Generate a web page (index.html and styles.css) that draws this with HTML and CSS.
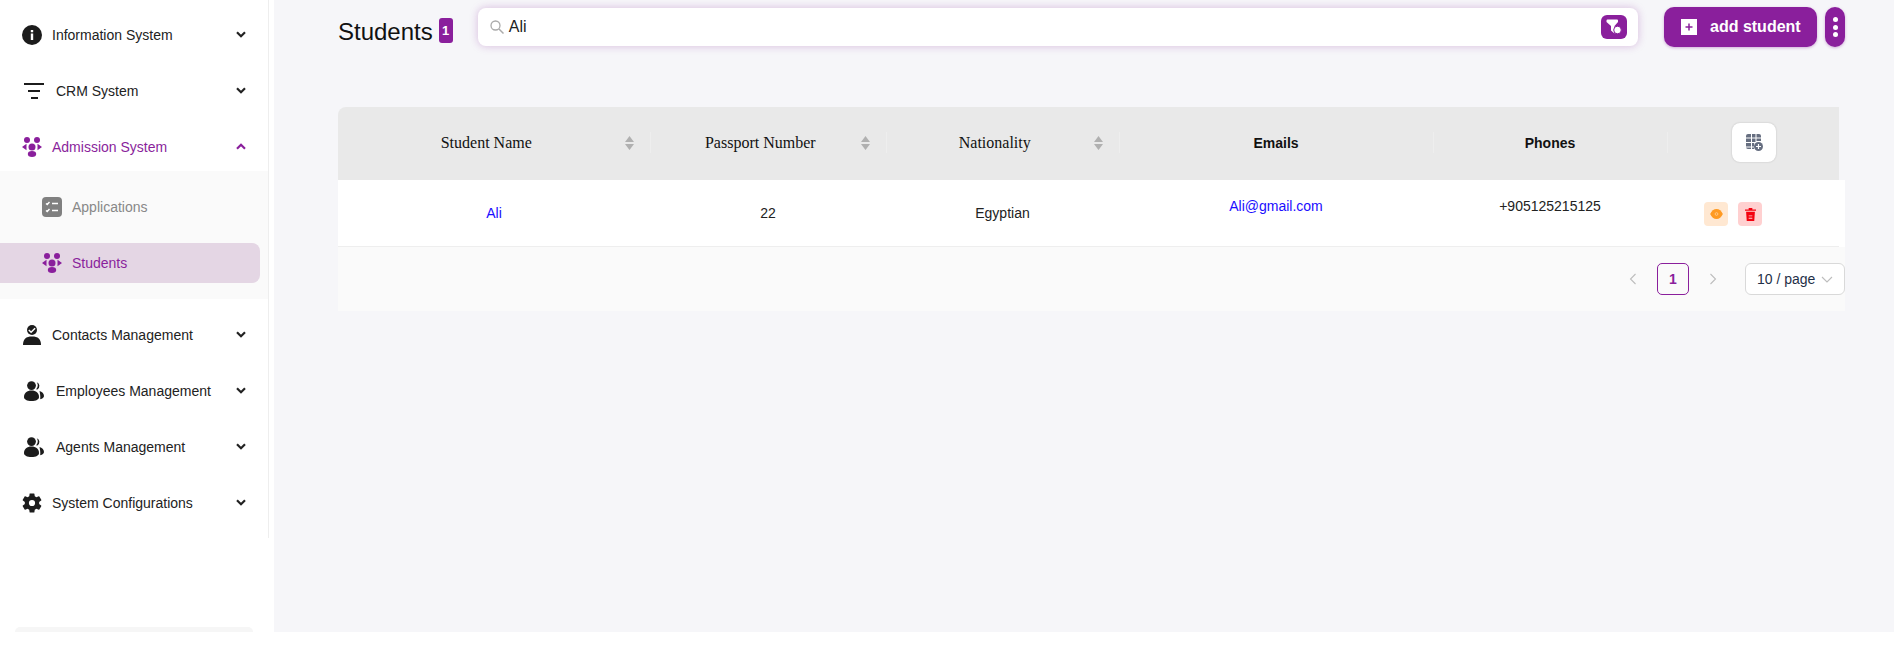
FILE: index.html
```html
<!DOCTYPE html>
<html>
<head>
  <title>Students</title>
  <meta name="viewport" content="width=device-width, initial-scale=1">
  <link rel="stylesheet" href="styles.css">
</head>
<body>
  <svg class="sprites" width="0" height="0">
    <symbol id="i-chevron" viewBox="0 0 10 7"><path d="M1 1.200l4 4 4-4" fill="none" stroke="currentColor" stroke-width="2.200"/></symbol>
    <symbol id="i-group" viewBox="0 0 20 20">
      <circle cx="5" cy="3" r="3"/><circle cx="15" cy="3" r="3"/><circle cx="10" cy="10" r="3.500"/>
      <path d="M0 10l4.500-3.200v6.400zM20 10l-4.500-3.200v6.400z"/><ellipse cx="10" cy="17" rx="4.200" ry="3"/>
    </symbol>
    <symbol id="i-users" viewBox="0 0 20 20">
      <circle cx="7.500" cy="4.600" r="4.400"/>
      <path d="M0 16c0-4 3-6.500 7.500-6.500S15 12 15 16c0 2.500-3 4-7.500 4S0 18.500 0 16z"/>
      <path d="M12.800 1.200a4 4 0 0 1 .6 7.200 5 5 0 0 1-1.200-.2 6 6 0 0 0 .6-7zM15.500 10c2.500.6 4.500 2.600 4.500 5 0 1.600-1.400 2.800-3.800 3.200.4-2.800-.2-5.800-.7-8.200z"/>
    </symbol>
    <symbol id="i-trash" viewBox="0 0 12 14"><path d="M4 0h4v1.500h4V3H0V1.500h4zM1.200 4h9.600l-.7 10H1.900zM4 8v1h4V8zm0 2.500v1h4v-1z" fill-rule="evenodd"/></symbol>
    <symbol id="i-sort" viewBox="0 0 9 14"><path d="M4.500 0L9 6H0zM0 8h9l-4.500 6z"/></symbol>
  </svg>

  <div class="page">
    <aside class="sidebar">
      <nav class="nav">
        <a class="nav-row">
          <svg class="nav-icon" viewBox="0 0 20 20"><circle cx="10" cy="10" r="10"/><path d="M8.800 8.500h2.400v6.500H8.800zM8.800 5h2.400v2.300H8.800z" fill="#fff"/></svg>
          <span>Information System</span>
          <svg class="chevron"><use href="#i-chevron"/></svg>
        </a>
        <a class="nav-row nav-row-wide">
          <svg class="nav-icon" viewBox="0 0 20 20"><path d="M0 2h20v2H0zM4 9h12v2H4zM7 16h7v2H7z"/></svg>
          <span>CRM System</span>
          <svg class="chevron"><use href="#i-chevron"/></svg>
        </a>
        <a class="nav-row nav-row-active">
          <svg class="nav-icon"><use href="#i-group"/></svg>
          <span>Admission System</span>
          <svg class="chevron chevron-up"><use href="#i-chevron"/></svg>
        </a>
        <div class="subnav">
          <a class="sub-row">
            <svg class="nav-icon icon-muted" viewBox="0 0 20 20"><rect width="20" height="20" rx="4"/><path d="M4 6.500l1.200 1L7.500 5M4 13.500l1.200 1 2.300-2.500M10 6.500h6M10 13.500h6" fill="none" stroke="#fff" stroke-width="1.400"/></svg>
            <span>Applications</span>
          </a>
          <a class="sub-row sub-row-active">
            <svg class="nav-icon"><use href="#i-group"/></svg>
            <span>Students</span>
          </a>
        </div>
        <a class="nav-row">
          <svg class="nav-icon" viewBox="0 0 20 20"><circle cx="10" cy="5" r="5"/><path d="M6.800 5l2.300 2.200 4-4" fill="none" stroke="#fff" stroke-width="1.500"/><path d="M1 20c0-6 3-8.500 9-8.500s9 2.500 9 8.500z"/></svg>
          <span>Contacts Management</span>
          <svg class="chevron"><use href="#i-chevron"/></svg>
        </a>
        <a class="nav-row nav-row-wide">
          <svg class="nav-icon"><use href="#i-users"/></svg>
          <span>Employees Management</span>
          <svg class="chevron"><use href="#i-chevron"/></svg>
        </a>
        <a class="nav-row nav-row-wide">
          <svg class="nav-icon"><use href="#i-users"/></svg>
          <span>Agents Management</span>
          <svg class="chevron"><use href="#i-chevron"/></svg>
        </a>
        <a class="nav-row">
          <svg class="nav-icon" viewBox="2 2 20 20"><path d="M19.140 12.940c.04-.3.06-.61.06-.94 0-.32-.02-.64-.07-.94l2.030-1.580a.49.49 0 0 0 .12-.61l-1.920-3.320a.488.488 0 0 0-.59-.22l-2.390.96c-.5-.38-1.030-.7-1.620-.94l-.36-2.540a.484.484 0 0 0-.48-.41h-3.840c-.24 0-.43.17-.47.41l-.36 2.540c-.59.24-1.130.57-1.620.94l-2.390-.96c-.22-.08-.47 0-.59.22L2.740 8.870c-.12.21-.08.47.12.61l2.030 1.580c-.05.3-.09.63-.09.94s.02.64.07.94l-2.030 1.580a.49.49 0 0 0-.12.61l1.920 3.320c.12.22.37.29.59.22l2.390-.96c.5.38 1.030.7 1.620.94l.36 2.540c.05.24.24.41.48.41h3.840c.24 0 .44-.17.47-.41l.36-2.540c.59-.24 1.130-.56 1.620-.94l2.390.96c.22.08.47 0 .59-.22l1.920-3.320c.12-.22.07-.47-.12-.61l-2.010-1.580zM12 15.100a3.100 3.100 0 1 1 0-6.200 3.100 3.100 0 0 1 0 6.200z"/></svg>
          <span>System Configurations</span>
          <svg class="chevron"><use href="#i-chevron"/></svg>
        </a>
      </nav>
      <div class="sidebar-foot"></div>
    </aside>

    <main class="main">
      <div class="topbar">
        <div class="title">
          <h1>Students</h1>
          <span class="count">1</span>
        </div>
        <div class="search">
          <svg class="search-icon" viewBox="0 0 14 14"><circle cx="5.500" cy="5.500" r="4.500" fill="none" stroke="#aaa" stroke-width="1.300"/><path d="M9 9l4.500 4.500" stroke="#aaa" stroke-width="1.500"/></svg>
          <span class="search-text">Ali</span>
          <button class="filter-btn">
            <svg viewBox="0 0 16 16"><path d="M0.500 1.500a1 1 0 0 1 1-1h9.500a1 1 0 0 1 1 1V3L8.500 7v7.500L5 11.500V7L.5 3z" fill="#fff"/><circle cx="11.500" cy="11" r="3.800" fill="#fff" stroke="#8a1f9c"/></svg>
          </button>
        </div>
        <button class="add-btn">
          <svg viewBox="0 0 16 16"><rect width="16" height="16" fill="#fff"/><path d="M8 4.500v7M4.500 8h7" stroke="#8a1f9c" stroke-width="1.500"/></svg>
          add student
        </button>
        <button class="more-btn"><i></i><i></i><i></i></button>
      </div>

      <section class="table">
        <div class="thead">
          <div class="th th-sort">
            <span class="th-text">Student Name</span>
            <svg class="sort"><use href="#i-sort"/></svg>
          </div>
          <div class="th th-sort">
            <span class="th-text">Passport Number</span>
            <svg class="sort"><use href="#i-sort"/></svg>
          </div>
          <div class="th th-sort">
            <span class="th-text">Nationality</span>
            <svg class="sort"><use href="#i-sort"/></svg>
          </div>
          <div class="th th-bold">Emails</div>
          <div class="th th-bold">Phones</div>
          <div class="th th-last">
            <button class="columns-btn">
              <svg viewBox="0 0 17 17"><path d="M2 0h3v3.500H0V2a2 2 0 0 1 2-2zM6 0h3.500v3.500H6zM10.500 0H13a2 2 0 0 1 2 2v1.500h-4.500zM0 4.500h5V8H0zM6 4.500h3.500V8H6zM10.500 4.500H15V7h-4.500zM0 9h5v3.500H0zM6 9h2v3.500H6zM0 13.500h5V15H2a2 2 0 0 1-2-2zM6 13.500h2V15H6z" fill="#666e80"/><circle cx="12.500" cy="12.500" r="4.500" fill="#666e80"/><path d="M12.500 10v5M10 12.500h5" stroke="#fff" stroke-width="1.200"/></svg>
            </button>
          </div>
        </div>
        <div class="tr">
          <div class="td"><a class="link">Ali</a></div>
          <div class="td">22</div>
          <div class="td">Egyptian</div>
          <div class="td td-high"><a class="link">Ali@gmail.com</a></div>
          <div class="td td-high">+905125215125</div>
          <div class="td td-actions">
            <button class="action action-view">
              <svg viewBox="0 0 14 11"><path d="M0 5.500C1.500 2 4 0 7 0s5.500 2 7 5.500C12.500 9 10 11 7 11S1.500 9 0 5.500z" fill="#ff9a22"/><circle cx="7" cy="5.500" r="1.500" fill="none" stroke="#ffc98a"/></svg>
            </button>
            <button class="action action-delete">
              <svg class="trash"><use href="#i-trash"/></svg>
            </button>
          </div>
        </div>
        <div class="pager">
          <svg class="pager-arrow" viewBox="0 0 8 12"><path d="M6.500 1L1.500 6l5 5" fill="none" stroke="#bdbdbd" stroke-width="1.100"/></svg>
          <span class="pager-num">1</span>
          <svg class="pager-arrow" viewBox="0 0 8 12"><path d="M1.500 1l5 5-5 5" fill="none" stroke="#bdbdbd" stroke-width="1.100"/></svg>
          <div class="page-size">
            <span>10 / page</span>
            <svg viewBox="0 0 12 7"><path d="M1 1l5 5 5-5" fill="none" stroke="#bdbdbd" stroke-width="1.100"/></svg>
          </div>
        </div>
      </section>
    </main>
  </div>
</body>
</html>
```

FILE: styles.css
```css
* {
  box-sizing: border-box;
}

html, body {
  margin: 0;
  padding: 0;
  background: #fff;
  font-family: "Liberation Sans", Arial, sans-serif;
  color: #222;
}

button {
  border: none;
  padding: 0;
  font-family: inherit;
}

.sprites {
  display: block;
  height: 0;
}

.page {
  display: flex;
  height: 632px;
  overflow: hidden;
}

/* sidebar */
.sidebar {
  width: 274px;
  flex-shrink: 0;
  display: flex;
  flex-direction: column;
  background: #fff;
}

.nav {
  width: 269px;
  height: 538px;
  padding-top: 11px;
  border-right: 1px solid #eee;
  display: flex;
  flex-direction: column;
}

.nav-row {
  display: flex;
  align-items: center;
  gap: 10px;
  height: 48px;
  flex-shrink: 0;
  margin-bottom: 8px;
  padding: 0 22px;
  font-size: 14px;
  color: #222;
}

.nav-row-wide {
  padding-left: 24px;
  gap: 12px;
}

.nav-row-active {
  margin-bottom: 0;
  color: #8a1f9c;
}

.nav-icon {
  width: 20px;
  height: 20px;
  flex-shrink: 0;
  fill: #1c1c1c;
}

.nav-row-active .nav-icon,
.sub-row-active .nav-icon {
  fill: #8a1f9c;
}

.icon-muted {
  fill: #808080;
}

.chevron {
  width: 10px;
  height: 7px;
  margin-left: auto;
  margin-top: -1px;
  color: #222;
}

.chevron-up {
  color: #8a1f9c;
  transform: rotate(180deg);
}

.subnav {
  display: flex;
  flex-direction: column;
  gap: 16px;
  padding: 16px 0;
  margin-bottom: 12px;
  background: #fafafa;
}

.sub-row {
  display: flex;
  align-items: center;
  gap: 10px;
  height: 40px;
  width: 260px;
  padding-left: 42px;
  font-size: 14px;
  color: #888;
}

.sub-row-active {
  background: #e4d6e4;
  border-radius: 0 8px 8px 0;
  color: #8a1f9c;
}

.sidebar-foot {
  width: 238px;
  height: 5px;
  margin: 89px 0 0 15px;
  background: #f6f6f6;
  border-radius: 14px 14px 0 0;
}

/* main area */
.main {
  flex: 1;
  background: #f6f6f9;
  padding: 7px 49px 0 64px;
}

.topbar {
  display: flex;
  align-items: center;
  height: 40px;
}

.title {
  display: flex;
  align-items: center;
  gap: 6px;
  margin: 7px 25px 0 0;
}

.title h1 {
  margin: 2px 0 0;
  font-size: 24px;
  font-weight: 400;
  color: #111;
}

.count {
  width: 14px;
  height: 25px;
  margin-top: -1px;
  line-height: 25px;
  border-radius: 3px;
  background: #8a1f9c;
  color: #fff;
  font-size: 13px;
  font-weight: 700;
  text-align: center;
}

.search {
  flex: 1;
  display: flex;
  align-items: center;
  height: 38px;
  padding: 0 11px 0 12px;
  background: #fff;
  border-radius: 8px;
  box-shadow: 0 0 8px rgba(138, 31, 156, 0.28);
}

.search-icon {
  width: 14px;
  height: 14px;
  margin-right: 5px;
}

.search-text {
  flex: 1;
  font-size: 16px;
  color: #222;
}

.filter-btn {
  width: 26px;
  height: 24px;
  padding: 4px 5px;
  background: #8a1f9c;
  border-radius: 6px;
}

.filter-btn svg {
  display: block;
  width: 16px;
  height: 16px;
}

.add-btn {
  display: flex;
  align-items: center;
  gap: 13px;
  width: 153px;
  height: 40px;
  margin-left: 26px;
  padding-left: 17px;
  background: #8a1f9c;
  border-radius: 10px;
  box-shadow: 0 1px 3px rgba(138, 31, 156, 0.35);
  color: #fff;
  font-size: 16px;
  font-weight: 700;
}

.add-btn svg {
  width: 16px;
  height: 16px;
}

.more-btn {
  display: flex;
  flex-direction: column;
  align-items: center;
  justify-content: center;
  gap: 2.5px;
  width: 20px;
  height: 40px;
  margin-left: 8px;
  background: #8a1f9c;
  border-radius: 10px;
  box-shadow: 0 1px 3px rgba(138, 31, 156, 0.35);
}

.more-btn i {
  width: 5px;
  height: 5px;
  border-radius: 50%;
  background: #fff;
}

/* table */
.table {
  margin-top: 60px;
}

.thead, .tr {
  display: grid;
  grid-template-columns: 312px 236px 233px 314px 234px 172px;
}

.thead {
  height: 73px;
  background: #e9e9e9;
  border-radius: 8px 0 0 0;
  width: 1501px;
}

.th {
  position: relative;
  display: flex;
  align-items: center;
  justify-content: center;
  padding-bottom: 1px;
  font-size: 14px;
  color: #111;
}

.th::before {
  content: "";
  position: absolute;
  left: 0;
  top: 25px;
  height: 21px;
  width: 1px;
  background: #eee;
}

.th:first-child::before {
  display: none;
}

.th-sort {
  padding: 0 16.5px 1px 10px;
  font-family: "Liberation Serif", "Times New Roman", serif;
  font-size: 16px;
}

.th-text {
  flex: 1;
  text-align: center;
}

.th-bold {
  font-weight: 700;
}

.th-last {
  justify-content: flex-start;
  padding-left: 65px;
}

.sort {
  width: 9px;
  height: 14px;
  fill: #b0b0b0;
}

.columns-btn {
  display: flex;
  align-items: center;
  justify-content: center;
  width: 44px;
  height: 39px;
  margin-top: -1px;
  background: #fff;
  border-radius: 8px;
  box-shadow: 0 0 2px rgba(0, 0, 0, 0.2);
}

.columns-btn svg {
  width: 17px;
  height: 17px;
}

.tr {
  width: 1507px;
  height: 67px;
  grid-template-columns: 312px 236px 233px 314px 234px 178px;
  background: linear-gradient(#eee, #eee) left bottom / 1501px 1px no-repeat #fff;
}

.td {
  display: flex;
  align-items: center;
  justify-content: center;
  padding-bottom: 1px;
  font-size: 14px;
  color: #222;
}

.td-high {
  padding-bottom: 15px;
}

.td-actions {
  justify-content: flex-start;
  gap: 10px;
  padding: 1px 0 0 37px;
}

.link {
  color: #1a0dff;
}

.action {
  display: flex;
  align-items: center;
  justify-content: center;
  width: 24px;
  height: 24px;
  border-radius: 4px;
}

.action-view {
  background: #ffe8d2;
}

.action-view svg {
  width: 13px;
  height: 10px;
}

.action-delete {
  background: #ffd0d0;
}

.trash {
  width: 11px;
  height: 13px;
  fill: #f4000f;
}

.pager {
  display: flex;
  align-items: center;
  justify-content: flex-end;
  width: 1507px;
  height: 64px;
  background: #fafafa;
}

.pager-arrow {
  width: 32px;
  height: 12px;
}

.pager-num {
  width: 32px;
  height: 32px;
  margin: 0 8px;
  line-height: 30px;
  text-align: center;
  border: 1px solid #8a1f9c;
  border-radius: 5px;
  font-size: 14px;
  font-weight: 700;
  color: #8a1f9c;
}

.page-size {
  display: flex;
  align-items: center;
  justify-content: space-between;
  width: 100px;
  height: 32px;
  margin-left: 16px;
  padding: 0 11px;
  background: #fff;
  border: 1px solid #d9d9d9;
  border-radius: 6px;
  font-size: 14px;
  color: #1f3048;
}

.page-size svg {
  width: 12px;
  height: 7px;
}
```
